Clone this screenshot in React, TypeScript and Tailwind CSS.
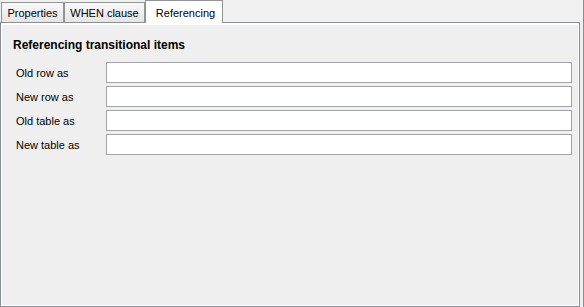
import React from 'react';

const fields = ['Old row as', 'New row as', 'Old table as', 'New table as'];

const TriggerReferencing: React.FC = () => {
  return (
    <div
      className="w-[584px] h-[307px] bg-[#f0f0f0] border-r border-[#8b8d95] flex flex-col text-[11px] text-black"
      style={{ fontFamily: '"Liberation Sans", Arial, sans-serif' }}
    >
      {/* Tabs */}
      <div className="h-[22px] flex items-end pl-[1px] relative z-10">
        <div className="w-[63px] h-[20px] border border-b-0 border-[#919499] bg-gradient-to-b from-[#f8f8f8] to-[#e6e6e6] flex items-center justify-center pt-[1px]">
          Properties
        </div>
        <div className="w-[81px] h-[20px] border border-b-0 border-[#919499] bg-gradient-to-b from-[#f8f8f8] to-[#e6e6e6] flex items-center justify-center pt-[1px]">
          WHEN clause
        </div>
        <div className="w-[78px] h-[23px] -mb-[1px] border border-b-0 border-[#919499] bg-white flex items-start justify-center pt-[4px] pl-[3px]">
          Referencing
        </div>
      </div>

      {/* Panel */}
      <div className="w-[580px] flex-1 border border-[#8b8d95] bg-white p-[1px] pt-[2px]">
        <div className="h-full bg-[#efefef] pl-[11px] pr-[6px] pt-[13px]">
          <div className="text-[12px] font-bold leading-[14px]">Referencing transitional items</div>
          <div className="mt-[10px] flex flex-col gap-[3px]">
            {fields.map((f) => (
              <div key={f} className="flex items-center">
                <span className="w-[93px] pl-[3px] pt-[1px]">{f}</span>
                <div className="flex-1 h-[21px] border border-[#a3a3aa] bg-white" />
              </div>
            ))}
          </div>
        </div>
      </div>
    </div>
  );
};

export default function App() {
  return <TriggerReferencing />;
}
